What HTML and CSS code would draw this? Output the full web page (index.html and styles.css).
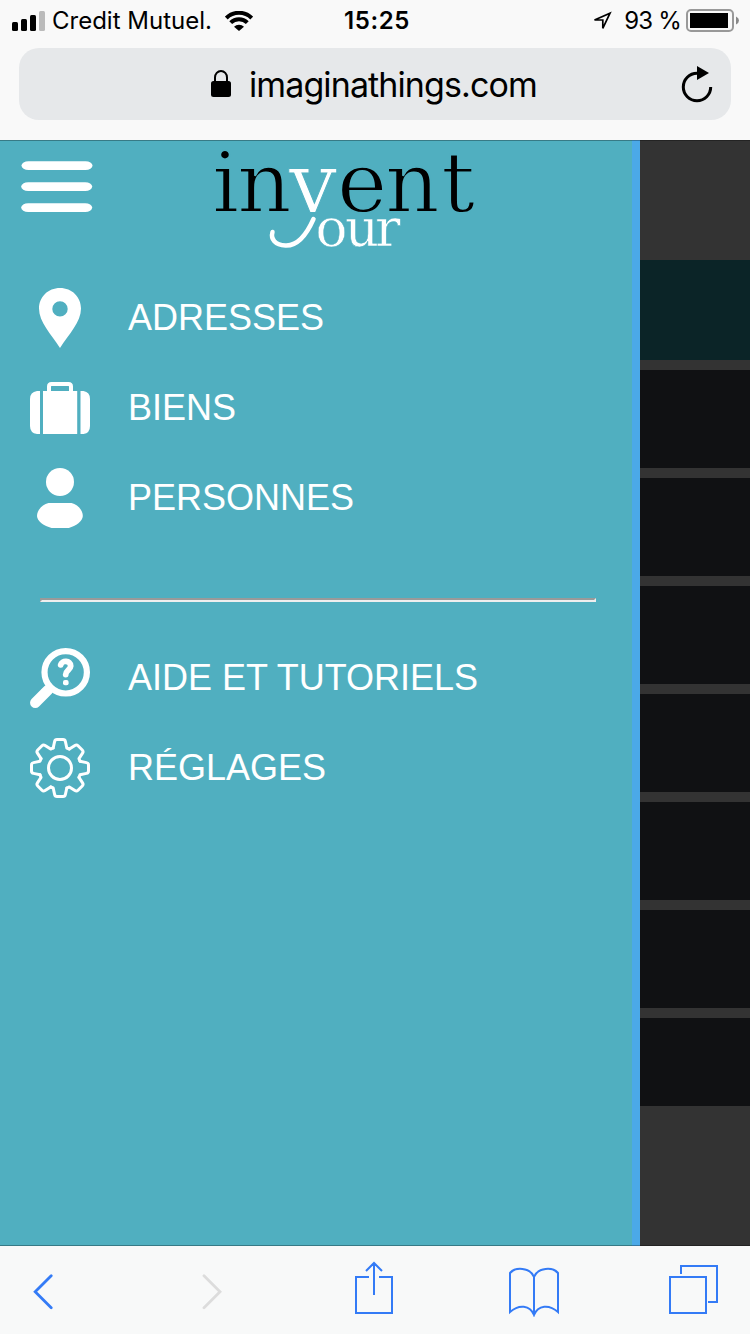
FILE: index.html
```html
<!DOCTYPE html>
<html lang="fr">
<head>
  <meta charset="UTF-8">
  <meta name="viewport" content="width=device-width, initial-scale=1.0">
  <title>Invent your</title>
  <link rel="stylesheet" href="styles.css">
</head>
<body>
  <header class="browser-top">
    <div class="status">
      <div class="status-left">
        <svg class="signal" width="34" height="20" viewBox="0 0 34 20">
          <rect x="0" y="11" width="6" height="9" rx="1.5"/>
          <rect x="9" y="8" width="6" height="12" rx="1.5"/>
          <rect x="18" y="4" width="6" height="16" rx="1.5"/>
          <rect x="27" y="0" width="6" height="20" rx="1.5" fill="#bbb"/>
        </svg>
        <span class="carrier">Credit Mutuel.</span>
        <svg class="wifi" width="28" height="20" viewBox="0 0 28 20">
          <path d="M1.300 7A18 18 0 0 1 26.700 7M5.700 11.700a11.700 11.700 0 0 1 16.600 0" fill="none" stroke="#000" stroke-width="4"/>
          <path d="M9 15.800a7 7 0 0 1 10 0L14 20z"/>
        </svg>
      </div>
      <span class="time">15:25</span>
      <div class="status-right">
        <svg width="20" height="20" viewBox="0 0 20 20">
          <path d="M2.500 9L18 2.200 10.800 17.300V9z" fill="none" stroke="#000" stroke-width="1.700"/>
        </svg>
        <span class="percent">93 %</span>
        <svg width="53" height="23" viewBox="0 0 53 23">
          <rect x="1" y="1" width="46" height="21" rx="4" fill="none" stroke="#999" stroke-width="2"/>
          <rect x="4" y="4" width="38" height="15"/>
          <path d="M50 7.500q3 1.500 3 4t-3 4z" fill="#888"/>
        </svg>
      </div>
    </div>
    <div class="address-bar">
      <svg class="lock" width="20" height="28" viewBox="0 0 20 28">
        <rect x="0" y="11" width="20" height="16" rx="2.500"/>
        <path d="M4 12V7.500a6 6.500 0 0 1 12 0V12" fill="none" stroke="#000" stroke-width="2"/>
      </svg>
      <span class="url">imaginathings.com</span>
      <svg class="reload" width="32" height="37" viewBox="0 0 32 37">
        <path d="M16 7.300A13.700 13.700 0 1 0 29.700 21" fill="none" stroke="#000" stroke-width="3"/>
        <path d="M16 0l12 7-12 7z"/>
      </svg>
    </div>
  </header>

  <main class="page">
    <nav class="drawer">
      <div class="drawer-header">
        <svg class="burger" width="72" height="52" viewBox="0 0 72 52">
          <rect x="0.500" y="0.200" width="71" height="8.800" rx="7" ry="4.400"/>
          <rect x="0.200" y="21.200" width="71" height="8.800" rx="7" ry="4.400"/>
          <rect x="0.200" y="42.200" width="71" height="8.800" rx="7" ry="4.400"/>
        </svg>
        <svg class="logo" width="270" height="106" viewBox="0 0 270 106">
          <text class="logo-big" x="2 27 127 175 231" y="69.500">inent</text>
          <text class="logo-big logo-white" x="79" y="69.500">v</text>
          <path d="M103.500 77C96 94 86 104 75.500 103.500C65 103 60.500 97 62.500 90" fill="none" stroke="#fff" stroke-width="4.500" stroke-linecap="round"/>
          <text class="logo-small" x="105.500 135 165" y="103.500">our</text>
        </svg>
      </div>

      <a class="item">
        <svg class="icon" viewBox="0 0 60 60">
          <path fill-rule="evenodd" d="M30 0C18 0 9 9 9 20.500C9 34 21 46 30 60C39 46 51 34 51 20.500C51 9 42 0 30 0zM30 13.200a7.700 7.700 0 1 1 0 15.400a7.700 7.700 0 1 1 0-15.400z"/>
        </svg>
        <span>ADRESSES</span>
      </a>
      <a class="item">
        <svg class="icon" viewBox="0 0 60 60">
          <path d="M10 13v43H7q-7-1-7-8V21q0-7 7-8zM50.500 13v43h3q6.500-1 6.500-8V21q0-7-6.500-8zM13 13h34.200v43H13z"/>
          <path d="M19 14V8.500q0-2.500 2.500-2.500h17q2.500 0 2.500 2.500V14" fill="none" stroke="#fff" stroke-width="4"/>
        </svg>
        <span>BIENS</span>
      </a>
      <a class="item">
        <svg class="icon" viewBox="0 0 60 60">
          <circle cx="30" cy="14" r="14"/>
          <path d="M18.500 35h23c6 1.500 11.300 7 11.300 13 0 5-7 10-14 12H21.500C14 58 7 53 7 48c0-6 5.500-11.500 11.500-13z"/>
        </svg>
        <span>PERSONNES</span>
      </a>

      <div class="separator"></div>

      <a class="item">
        <svg class="icon icon-line" viewBox="0 0 60 60">
          <circle cx="35.700" cy="24.300" r="21.200" stroke-width="6.200"/>
          <path d="M5.300 54.700L18 42" stroke-width="10.500"/>
          <path d="M19 36l5 5-7 7-6-6z" fill="#fff" stroke="none"/>
          <path d="M30.700 16.800c1-4.800 10-4.500 10 1.200-.2 3.800-5 4.500-5 8.500" stroke-width="5.800"/>
          <rect x="33" y="32" width="5.600" height="5.200" rx="2" fill="#fff" stroke="none"/>
        </svg>
        <span>AIDE ET TUTORIELS</span>
      </a>
      <a class="item">
        <svg class="icon icon-line" viewBox="0 0 60 60">
          <defs>
            <path id="tooth" d="M23.200 10L24.600 3.500Q25 1.500 27 1.500h6q2 0 2.400 2L36.800 10L39.300 11"/>
          </defs>
          <g stroke-width="3">
            <use href="#tooth"/>
            <use href="#tooth" transform="rotate(45 30 30)"/>
            <use href="#tooth" transform="rotate(90 30 30)"/>
            <use href="#tooth" transform="rotate(135 30 30)"/>
            <use href="#tooth" transform="rotate(180 30 30)"/>
            <use href="#tooth" transform="rotate(225 30 30)"/>
            <use href="#tooth" transform="rotate(270 30 30)"/>
            <use href="#tooth" transform="rotate(315 30 30)"/>
            <circle cx="30" cy="30" r="11.500"/>
          </g>
        </svg>
        <span>RÉGLAGES</span>
      </a>
    </nav>

    <div class="behind">
      <div class="row row-title"></div>
      <div class="row"></div>
      <div class="row"></div>
      <div class="row"></div>
      <div class="row"></div>
      <div class="row"></div>
      <div class="row"></div>
      <div class="row row-last"></div>
    </div>
  </main>

  <footer class="toolbar">
    <svg class="back" width="22" height="36" viewBox="0 0 22 36">
      <path d="M18.200 1.700L2.200 17.700l16 16"/>
    </svg>
    <svg class="forward" width="22" height="36" viewBox="0 0 22 36">
      <path d="M2 1.700l16 16-16 16"/>
    </svg>
    <svg class="share" width="40" height="54" viewBox="0 0 40 54">
      <path d="M15 16H2v36h36V16H25M20 34V2M12 10l8-8 8 8"/>
    </svg>
    <svg class="book" width="52" height="50" viewBox="0 0 52 50">
      <path d="M26 48V10C22 0 7 0 2 6V45C11 37 22 38 26 48C30 38 41 37 50 45V6C45 0 30 0 26 10"/>
    </svg>
    <svg class="tabs" width="52" height="52" viewBox="0 0 52 52">
      <path d="M2 14h36v36H2zM13 11V3h36v36h-9"/>
    </svg>
  </footer>
</body>
</html>
```
FILE: styles.css
```css
* {
  margin: 0;
  padding: 0;
  box-sizing: border-box;
}
body {
  width: 750px;
  height: 1334px;
  display: flex;
  flex-direction: column;
  overflow: hidden;
  font-family: "Liberation Sans", Arial, sans-serif;
  background-color: #f9f9f9;
}
svg {
  display: block;
  flex-shrink: 0;
}

/* browser bar */
.browser-top {
  height: 140px;
  padding: 0 19px;
  font-family: Inter, sans-serif;
  color: #000;
}
.status {
  height: 48px;
  margin: 0 -8px 0 -7px;
  padding-bottom: 7px;
  display: grid;
  grid-template-columns: 1fr auto 1fr;
  align-items: center;
  font-size: 24px;
  line-height: 40px;
}
.status-left,
.status-right {
  display: flex;
  align-items: center;
}
.status-right {
  justify-content: flex-end;
}
.carrier {
  width: 172px;
  padding-left: 6px;
  white-space: nowrap;
}
.time {
  padding-left: 3px;
  font-weight: 600;
  letter-spacing: 0.6px;
}
.wifi {
  margin-left: 7px;
}
.percent {
  margin: 0 5px 0 12px;
  letter-spacing: -0.8px;
}
.address-bar {
  height: 72px;
  padding: 0 18px 0 192px;
  display: flex;
  align-items: center;
  background-color: #e6e8ea;
  border-radius: 20px;
}
.url {
  flex: 1;
  margin-left: 18px;
  font-size: 34px;
  letter-spacing: -0.9px;
}

/* page */
.page {
  height: 1106px;
  display: flex;
  position: relative;
  background-color: #333;
}
.page::after {
  content: "";
  position: absolute;
  inset: 0;
  border-top: 1px solid rgba(0, 0, 0, 0.3);
  border-bottom: 1px solid rgba(0, 0, 0, 0.3);
}
.drawer {
  width: 640px;
  background-color: #50afc0;
  border-right: 8px solid #4ba9e8;
}
.drawer-header {
  height: 133px;
  padding: 2px 0 0 21px;
  display: flex;
}
.burger {
  margin-top: 19px;
  fill: #fff;
}
.logo {
  margin-left: 117px;
  overflow: visible;
}
.logo-big,
.logo-small {
  font-family: "DejaVu Serif", serif;
  stroke: #50afc0;
}
.logo-big {
  font-size: 85px;
  stroke-width: 1.8px;
}
.logo-small {
  font-size: 53px;
  fill: #fff;
  stroke-width: 0.5px;
}
.logo-white {
  fill: #fff;
  stroke-width: 1px;
}
.item {
  height: 90px;
  padding-left: 30px;
  display: flex;
  align-items: center;
  gap: 38px;
  color: #fff;
  font-size: 36px;
}
.icon {
  width: 60px;
  height: 60px;
  fill: #fff;
}
.icon-line {
  fill: none;
  stroke: #fff;
  stroke-linecap: round;
  stroke-linejoin: round;
}
.separator {
  height: 4px;
  margin: 55px 36px 31px 40px;
  border: 2px solid;
  border-color: #9a9a9a #eee #eee #9a9a9a;
}
.behind {
  flex: 1;
  padding-top: 120px;
  display: flex;
  flex-direction: column;
  gap: 10px;
}
.row {
  height: 98px;
  background-color: #101113;
}
.row-title {
  height: 100px;
  background-color: #0b2427;
}
.row-last {
  height: 88px;
}

/* bottom toolbar */
.toolbar {
  height: 88px;
  display: flex;
  align-items: flex-start;
  background-color: #f8f9f9;
}
.toolbar svg {
  fill: none;
  stroke: #347bf6;
  stroke-width: 2;
}
.toolbar .back {
  margin: 28px 0 0 33px;
  stroke-width: 2.8;
  stroke-linecap: round;
}
.toolbar .forward {
  margin: 28px 0 0 147px;
  stroke: #dcdcdc;
  stroke-width: 2.8;
  stroke-linecap: round;
}
.toolbar .share {
  margin: 15px 0 0 130px;
}
.toolbar .book {
  margin: 21px 0 0 114px;
}
.toolbar .tabs {
  margin: 17px 0 0 108px;
}
```
